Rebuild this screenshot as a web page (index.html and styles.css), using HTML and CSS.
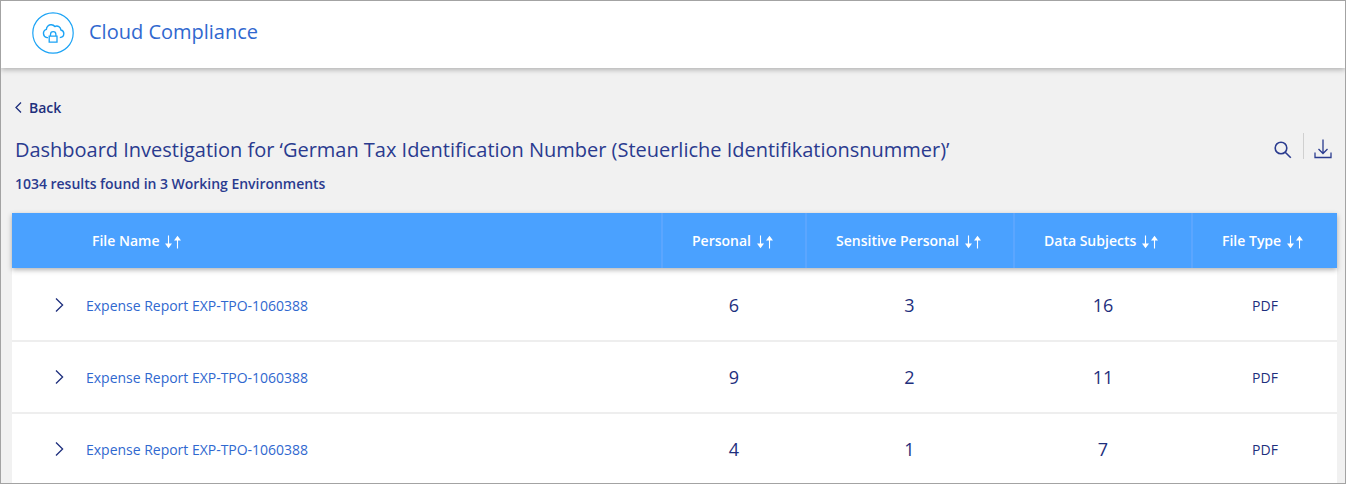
FILE: index.html
```
<!DOCTYPE html>
<html lang="en">
<head>
<meta charset="utf-8">
<title>Cloud Compliance</title>
<link rel="stylesheet" href="styles.css">
</head>
<body>
<svg class="symbols" width="0" height="0">
  <symbol id="sort" viewBox="0 0 16 14">
    <path d="M3.500 .5V10M12.500 13.500V4" fill="none" stroke="currentColor" stroke-width="1.100"/>
    <path d="M0 8.500h7L3.500 13.200zM9 5.500h7L12.500 .8z" fill="currentColor"/>
  </symbol>
  <symbol id="chevron" viewBox="0 0 9 16">
    <path d="M1 1.500 7.600 8 1 14.500" fill="none" stroke="currentColor" stroke-width="1.300"/>
  </symbol>
</svg>
<div class="app">
  <header class="topbar">
    <svg class="logo" width="42" height="42" viewBox="0 0 42 42" fill="none" stroke="currentColor">
      <circle cx="21" cy="21" r="20.200" stroke-width="1.200"/>
      <path d="M16 25.600h-1a4.300 4.300 0 0 1-.6-8.300c.1-2.700 2.300-4.800 4.900-4.600 1.500.1 2.700.7 3.500 1.800 2.900-1.300 6 .5 6.100 3.500 1.800.4 2.900 1.800 2.900 3.600 0 2.200-1.700 3.900-4 4" stroke-width="1.400"/>
      <path d="M17.200 24.200h7.800v6h-7.800zM18.500 24v-1.600a2.700 2.700 0 0 1 5.400 0V24" stroke-width="1.300"/>
    </svg>
    <span class="product">Cloud Compliance</span>
  </header>
  <main class="content">
    <a class="back">
      <svg width="7" height="12" viewBox="0 0 7 12"><path d="M6 1.500 1 6.500l5 5" fill="none" stroke="currentColor" stroke-width="1.300"/></svg>
      Back
    </a>
    <div class="heading">
      <h1 class="title">Dashboard Investigation for ‘German Tax Identification Number (Steuerliche Identifikationsnummer)’</h1>
      <div class="actions">
        <svg class="search" width="18" height="18" viewBox="0 0 18 18" fill="none" stroke="currentColor" stroke-width="1.600"><circle cx="7" cy="7" r="5.800"/><path d="m11.200 11.200 5.600 5.600"/></svg>
        <span class="divider"></span>
        <svg class="download" width="18" height="20" viewBox="0 0 18 20" fill="none" stroke="currentColor" stroke-width="1.300"><path d="M9 .5v14M4.500 10 9 14.500l4.500-4.500M1 13.500v5h16v-5"/></svg>
      </div>
    </div>
    <p class="summary">1034 results found in 3 Working Environments</p>
    <section class="table">
      <div class="row head">
        <div class="th name">File Name <svg class="sort"><use href="#sort"/></svg></div>
        <div class="th">Personal <svg class="sort"><use href="#sort"/></svg></div>
        <div class="th">Sensitive Personal <svg class="sort"><use href="#sort"/></svg></div>
        <div class="th">Data Subjects <svg class="sort"><use href="#sort"/></svg></div>
        <div class="th">File Type <svg class="sort"><use href="#sort"/></svg></div>
      </div>
      <div class="row">
        <div class="file"><svg class="chevron"><use href="#chevron"/></svg><a>Expense Report EXP-TPO-1060388</a></div>
        <div class="num">6</div><div class="num">3</div><div class="num">16</div><div class="type">PDF</div>
      </div>
      <div class="row">
        <div class="file"><svg class="chevron"><use href="#chevron"/></svg><a>Expense Report EXP-TPO-1060388</a></div>
        <div class="num">9</div><div class="num">2</div><div class="num">11</div><div class="type">PDF</div>
      </div>
      <div class="row">
        <div class="file"><svg class="chevron"><use href="#chevron"/></svg><a>Expense Report EXP-TPO-1060388</a></div>
        <div class="num">4</div><div class="num">1</div><div class="num">7</div><div class="type">PDF</div>
      </div>
    </section>
  </main>
</div>
</body>
</html>
```
FILE: styles.css
```
* { box-sizing: border-box; }
body { margin: 0; font-family: "Open Sans", sans-serif; font-size: 14px; color: #1e2f7d; }
svg { display: block; flex: none; }
.symbols { display: none; }
.app { width: 1346px; height: 484px; border: 1px solid #a3a3a3; background: #f1f1f1; overflow: hidden; display: flex; flex-direction: column; }
.topbar { height: 67px; flex: none; background: #fff; box-shadow: 0 2px 5px rgba(0, 0, 0, .26); display: flex; align-items: flex-start; padding: 11px 0 0 31px; gap: 15px; }
.logo { color: #1ba3f5; }
.product { font-size: 20px; line-height: 40px; color: #3068cf; }
.content { flex: none; padding: 0 8px 0 11px; }
.back { display: flex; align-items: center; gap: 7px; margin: 29px 0 0 3px; height: 20px; font-weight: 600; letter-spacing: -.02px; color: #1e2f7d; }
.heading { display: flex; justify-content: space-between; height: 32px; margin-top: 17px; padding-left: 3px; }
.title { margin: 0; font-size: 20px; line-height: 32px; font-weight: 400; letter-spacing: -.015px; color: #2a3b8f; white-space: nowrap; }
.actions { display: flex; align-items: center; color: #2a3b8f; padding-right: 5px; }
.divider { width: 1px; height: 26px; background: #d0d0d0; margin: -8px 10px 0 11px; }
.download { margin-top: -2px; }
.summary { margin: 8px 0 0 3px; line-height: 20px; font-weight: 600; font-size: 14px; letter-spacing: -.025px; color: #2a3b8f; }
.table { margin-top: 19px; background: #fff; }
.row { display: grid; grid-template-columns: 649px 144px 208px 178px 146px; height: 72px; align-items: center; }
.row + .row { border-bottom: 2px solid #eee; }
.head { position: relative; height: 55px; background: #4aa1ff; color: #fff; font-weight: 600; box-shadow: 0 2px 5px rgba(0, 0, 0, .3); }
.th { height: 55px; display: flex; align-items: center; gap: 5.5px; padding-left: 29px; border-left: 2px solid #5ba6ff; }
.th.name { border-left: 0; padding-left: 80px; }
.sort { width: 16px; height: 14px; margin-top: 2px; }
.head + .row { height: 74px; padding-top: 2px; }
.file { display: flex; align-items: center; padding-left: 43px; gap: 22px; letter-spacing: -.015px; color: #3068cf; }
.chevron { width: 9px; height: 16px; color: #1e2f7d; }
.num, .type { text-align: center; padding-left: 2px; }
.num { font-size: 18px; }
.num:nth-child(3) { padding-left: 1px; }
```
